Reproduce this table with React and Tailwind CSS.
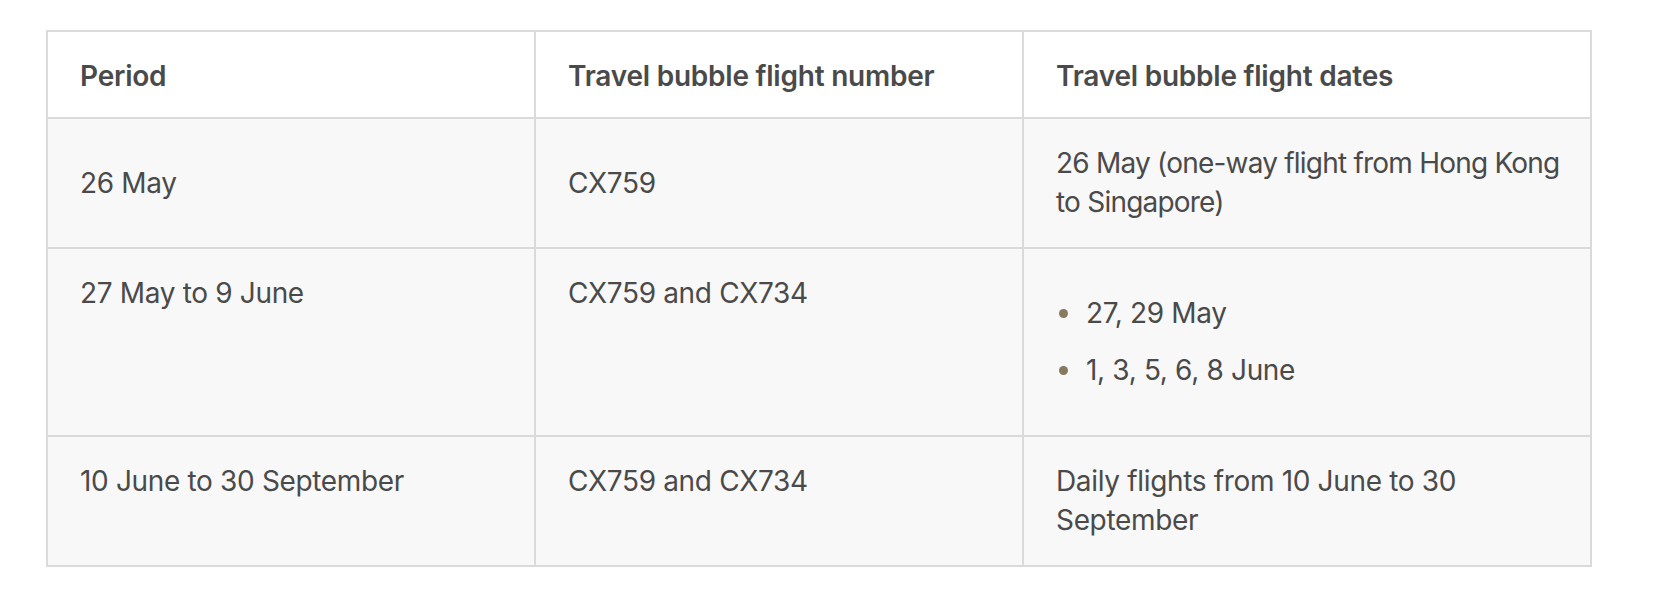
import React from 'react';

const rows = [
  { period: '26 May', flight: 'CX759', dates: '26 May (one-way flight from Hong Kong to Singapore)', center: true },
  { period: '27 May to 9 June', flight: 'CX759 and CX734', list: ['27, 29 May', '1, 3, 5, 6, 8 June'] },
  { period: '10 June to 30 September', flight: 'CX759 and CX734', dates: 'Daily flights from 10 June to 30 September' },
];

const App = () => {
  return (
    <div className="min-h-screen bg-white pt-[30px] pl-[46px]" style={{ fontFamily: 'Inter, "Noto Sans", sans-serif' }}>
      <div className="grid w-[1546px] grid-cols-[488px_488px_568px] border-l-2 border-t-2 border-[#dadada] text-[28px] leading-[39px] tracking-[-0.012em] text-[#4a4a4a]">
        {/* header */}
        <div className="border-b-2 border-r-2 border-[#dadada] bg-white px-8 pt-[25px] pb-[21px] font-semibold tracking-[-0.008em]">Period</div>
        <div className="border-b-2 border-r-2 border-[#dadada] bg-white px-8 pt-[25px] pb-[21px] font-semibold tracking-[-0.008em]">Travel bubble flight number</div>
        <div className="border-b-2 border-r-2 border-[#dadada] bg-white px-8 pt-[25px] pb-[21px] font-semibold tracking-[-0.008em]">Travel bubble flight dates</div>

        {rows.map((r, i) => (
          <React.Fragment key={i}>
            <div className={`flex border-b-2 border-r-2 border-[#dadada] bg-[#f8f8f8] px-8 py-[25px] ${r.center ? 'items-center' : 'items-start'}`}>
              {r.period}
            </div>
            <div className={`flex border-b-2 border-r-2 border-[#dadada] bg-[#f8f8f8] px-8 py-[25px] ${r.center ? 'items-center' : 'items-start'}`}>
              {r.flight}
            </div>
            <div className={`border-b-2 border-r-2 border-[#dadada] bg-[#f8f8f8] py-[25px] pl-8 pr-3 ${r.center ? 'tracking-[-0.028em]' : ''}`}>
              {r.list ? (
                <ul className="my-5 flex flex-col gap-[18px]">
                  {r.list.map((t) => (
                    <li key={t} className="flex items-center">
                      <span className="mr-[18px] ml-[3px] h-[9px] w-[9px] shrink-0 rounded-full bg-[#877a5e]"></span>
                      {t}
                    </li>
                  ))}
                </ul>
              ) : (
                r.dates
              )}
            </div>
          </React.Fragment>
        ))}
      </div>
    </div>
  );
};

export default App;
